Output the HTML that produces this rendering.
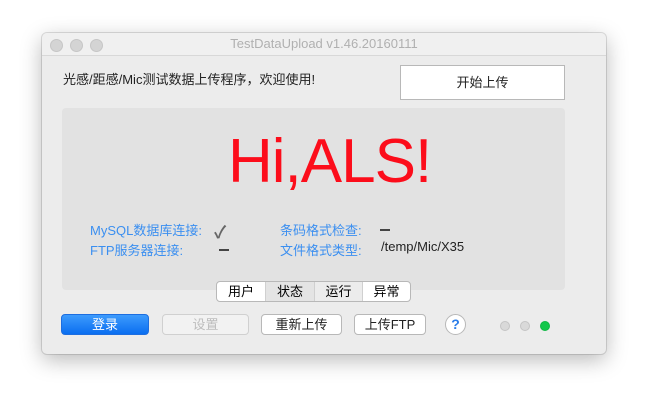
<!DOCTYPE html>
<html><head><meta charset="utf-8"><style>
body{margin:0;width:648px;height:405px;background:#fff;position:relative;overflow:hidden;font-family:"Liberation Sans","Noto Sans CJK SC",sans-serif;}
.win{position:absolute;left:42px;top:33px;width:564px;height:321px;background:#ececec;border-radius:5px;box-shadow:0 6px 22px rgba(0,0,0,0.28),0 0 0 1px rgba(0,0,0,0.12);}
.title{position:absolute;left:0;top:0;width:564px;height:22px;border-bottom:1px solid #d8d8d8;background:#f0f0f0;border-radius:5px 5px 0 0;text-align:center;font-size:13px;line-height:22px;color:#b0b0b0;}
.tl{position:absolute;top:6px;width:11px;height:11px;border-radius:50%;background:#d4d4d4;border:0.5px solid #c6c6c6;}
.a{position:absolute;white-space:nowrap;}
.btn{position:absolute;background:#fff;border:1px solid #b8b8b8;border-radius:4px;font-size:13px;text-align:center;color:#222;box-sizing:border-box;}
.panel{position:absolute;left:20px;top:75px;width:503px;height:182px;background:#e2e2e2;border-radius:4px;}
.blue{color:#3b8ff0;font-size:13px;}
.dash{position:absolute;width:10px;height:2px;background:#444;}
.dot{position:absolute;top:288px;width:10px;height:10px;border-radius:50%;background:#d9d9d9;border:1px solid #c4c4c4;box-sizing:border-box;}
</style></head><body>
<div class="win">
 <div class="title">TestDataUpload v1.46.20160111
  <div class="tl" style="left:8px"></div><div class="tl" style="left:28px"></div><div class="tl" style="left:48px"></div>
 </div>
 <div class="a" style="left:21px;top:36px;font-size:13px;color:#222">光感/距感/Mic测试数据上传程序，欢迎使用!</div>
 <div class="btn" style="left:358px;top:32px;width:165px;height:35px;border-radius:0;line-height:33px;">开始上传</div>
 <div class="panel">
  <div class="a" style="left:166px;top:18px;font-size:62px;color:#fc0d1b;letter-spacing:-1px">Hi,ALS!</div>
  <div class="a blue" style="left:28px;top:112px">MySQL数据库连接:</div>
  <div class="a" style="left:152px;top:110px;font-size:17px;color:#666;font-weight:bold">✓</div>
  <div class="a blue" style="left:28px;top:132px">FTP服务器连接:</div>
  <div class="dash" style="left:157px;top:141px"></div>
  <div class="a blue" style="left:218px;top:112px">条码格式检查:</div>
  <div class="dash" style="left:318px;top:121px"></div>
  <div class="a blue" style="left:218px;top:132px">文件格式类型:</div>
  <div class="a" style="left:319px;top:131px;font-size:13px;color:#222">/temp/Mic/X35</div>
 </div>
 <div style="position:absolute;left:174px;top:248px;width:193px;height:19px;border:1px solid #b8b8b8;border-radius:4px;background:#fff;display:flex;font-size:13px;line-height:19px;overflow:hidden">
  <div style="width:48px;text-align:center;border-right:1px solid #d0d0d0">用户</div>
  <div style="width:48px;text-align:center;background:#e4e4e4;border-right:1px solid #d0d0d0">状态</div>
  <div style="width:47px;text-align:center;background:#ececec;border-right:1px solid #d0d0d0">运行</div>
  <div style="flex:1;text-align:center">异常</div>
 </div>
 <div class="btn" style="left:19px;top:281px;width:88px;height:21px;line-height:19px;background:linear-gradient(#3d9bfd,#0a6ef0);border-color:#1d6ee0;color:#fff">登录</div>
 <div class="btn" style="left:120px;top:281px;width:87px;height:21px;line-height:19px;background:#f2f2f2;border-color:#d0d0d0;color:#bdbdbd">设置</div>
 <div class="btn" style="left:219px;top:281px;width:81px;height:21px;line-height:19px;">重新上传</div>
 <div class="btn" style="left:312px;top:281px;width:72px;height:21px;line-height:19px;">上传FTP</div>
 <div class="btn" style="left:403px;top:281px;width:21px;height:21px;border-radius:50%;line-height:19px;color:#2b7de9;font-weight:bold;font-size:14px">?</div>
 <div class="dot" style="left:458px"></div>
 <div class="dot" style="left:478px"></div>
 <div class="dot" style="left:498px;background:#12c74a;border-color:#0fb843"></div>
</div>
</body></html>
